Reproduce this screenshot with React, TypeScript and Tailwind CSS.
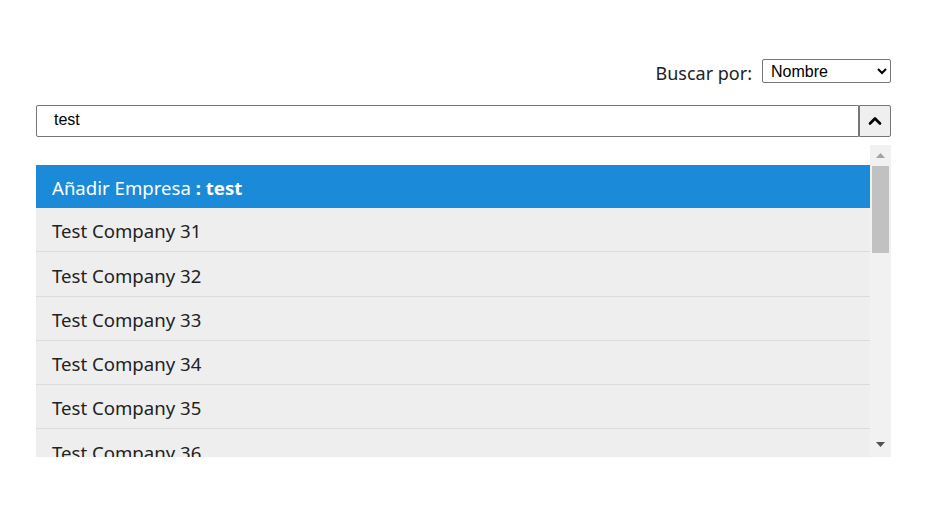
import { ChevronUp } from "lucide-react";

const companies = [31, 32, 33, 34, 35, 36, 37];

const App = () => {
  return (
    <div className="min-h-[532px] w-full bg-white">
      <div className="ml-[36px] w-[855px] pt-[59px]">
        <div className="flex h-[24px] items-center justify-end gap-[10px]">
          <label className="pt-[4px] font-['Noto_Sans',sans-serif] text-[18px] leading-[20px] text-[#222]">
            Buscar por:
          </label>
          <select
            defaultValue="nombre"
            className="h-[24px] w-[129px] rounded-[2px] border border-[#767676] bg-white px-[4px] font-['Liberation_Sans',Arial,sans-serif] text-[16px] leading-[20px] text-black"
          >
            <option value="nombre">Nombre</option>
            <option value="nif">NIF</option>
          </select>
        </div>

        <div className="mt-[22px] flex h-[32px]">
          <input
            type="text"
            defaultValue="test"
            className="h-[32px] flex-1 rounded-l-[2px] border border-[#767676] bg-white pl-[17px] pb-[2px] font-['Liberation_Sans',Arial,sans-serif] text-[16px] text-black outline-none"
          />
          <button className="flex h-[32px] w-[32px] items-center justify-center rounded-r-[2px] border border-[#767676] bg-[#efefef]">
            <ChevronUp className="h-[20px] w-[20px] text-black" strokeWidth={3.2} />
          </button>
        </div>

        <div className="mt-[8px] flex h-[312px] overflow-hidden">
          <ul className="flex-1 pt-[20px] font-['Noto_Sans',sans-serif] text-[18.6px]">
            <li className="flex h-[43px] items-center bg-[#1b8ad9] pl-[16px] pt-[2px] text-white">
              Añadir Empresa<span className="font-bold">&nbsp;: test</span>
            </li>
            {companies.map((n) => (
              <li
                key={n}
                className="flex h-[44.3px] items-center border-b border-[#dcdcdc] bg-[#eeeeee] pl-[16px] pt-[3px] text-[#222]"
              >
                Test Company {n}
              </li>
            ))}
          </ul>

          {/* scrollbar */}
          <div className="flex w-[21px] flex-col items-center bg-[#f1f1f1]">
            <div className="flex h-[21px] w-full items-center justify-center">
              <svg width="9" height="5" viewBox="0 0 9 5">
                <path d="M0 5 L4.5 0 L9 5 Z" fill="#a3a3a3" />
              </svg>
            </div>
            <div className="h-[87px] w-[17px] bg-[#c1c1c1]" />
            <div className="flex-1" />
            <div className="flex h-[21px] w-full items-center justify-center pb-[4px]">
              <svg width="9" height="5" viewBox="0 0 9 5">
                <path d="M0 0 L9 0 L4.5 5 Z" fill="#505050" />
              </svg>
            </div>
          </div>
        </div>
      </div>
    </div>
  );
};

export default App;
